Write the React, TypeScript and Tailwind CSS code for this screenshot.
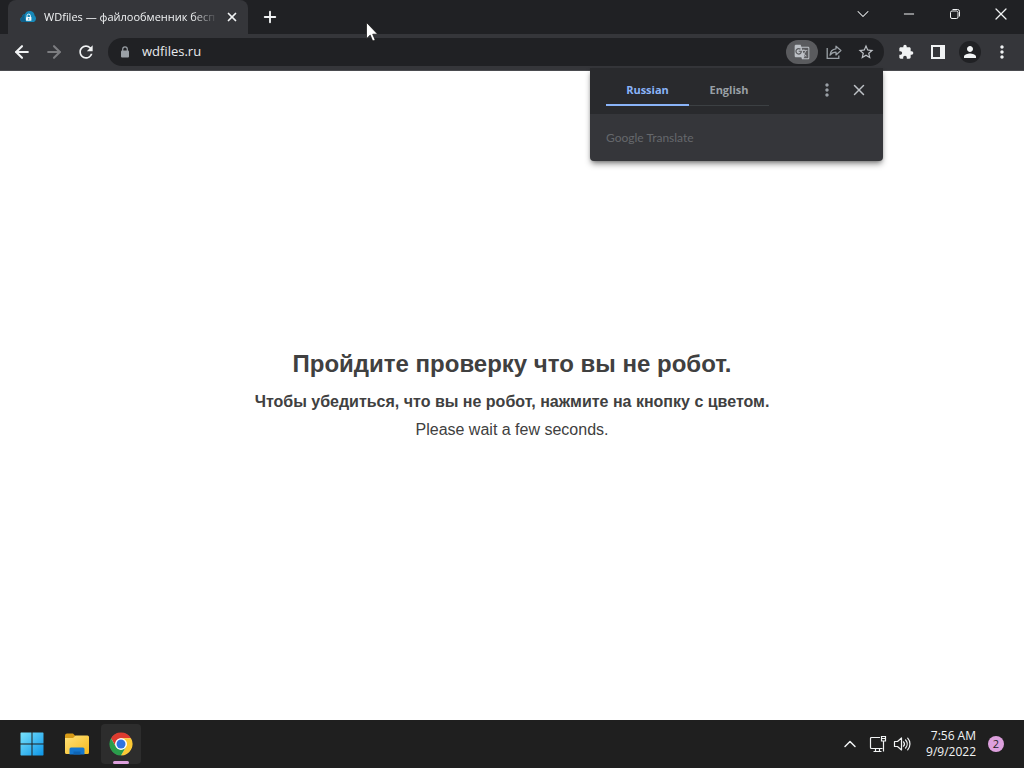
import type { ReactNode } from "react";
import clsx from "clsx";
import { ArrowLeft, ArrowRight, ChevronDown, ChevronUp, Minus, Plus, X } from "lucide-react";
import { MdExtension, MdGTranslate, MdMoreVert, MdPerson, MdRefresh, MdStarOutline } from "react-icons/md";

interface IconButtonProps {
  label: string;
  className?: string;
  children: ReactNode;
}

function IconButton({ label, className, children }: IconButtonProps) {
  return (
    <button type="button" aria-label={label} className={clsx("flex shrink-0 items-center justify-center", className)}>
      {children}
    </button>
  );
}

function CloudIcon() {
  return (
    <svg viewBox="0 0 16 16" className="size-4 shrink-0">
      <path d="M2.500 13a2.500 2.500 0 0 1-.6-4.800A3.600 3.600 0 0 1 5 5a5 5 0 0 1 9.600 1.500A4 4 0 0 1 14 13Z" fill="#1688b8" />
      <path d="M2.500 13a2.500 2.500 0 0 1-.6-4.800A3.600 3.600 0 0 1 5 5C4 7.500 4.500 10.500 6.500 13Z" fill="#0e5f88" />
      <path d="M7 8V6.800a1.700 1.700 0 0 1 3.400 0V8" fill="none" stroke="#e8f7fc" strokeWidth="1" />
      <rect x="6" y="8" width="5.400" height="3.800" rx=".6" fill="#f4fbfe" />
      <path d="M8.700 9.200v1.400" stroke="#1688b8" strokeWidth="1" />
    </svg>
  );
}

function LockIcon() {
  return (
    <svg viewBox="0 0 10 12" className="h-3 w-2.5 shrink-0">
      <path d="M2.700 5V3.200a2.300 2.300 0 0 1 4.600 0V5" fill="none" stroke="currentColor" strokeWidth="1.200" />
      <rect x="1" y="4.500" width="8" height="7" rx="1" fill="currentColor" />
    </svg>
  );
}

function ShareIcon() {
  return (
    <svg viewBox="0 0 16 16" className="size-4" fill="none" stroke="currentColor" strokeWidth="1.300">
      <path d="M1.200 4v10.300h11.600v-2.800" />
      <path d="M10 2.200v2.600C6.300 5.200 4.300 7.500 4 11.200c1.500-2.100 3.400-3 6-3v2.700l4.900-4.400Z" strokeLinejoin="round" />
    </svg>
  );
}

function SidePanelIcon() {
  return (
    <svg viewBox="0 0 14 14" className="size-3.5">
      <path d="M0 0h14v14H0Z" fill="#f1f3f4" />
      <path d="M2 2h7v10H2Z" fill="#35363a" />
    </svg>
  );
}

function RestoreIcon() {
  return (
    <svg viewBox="0 0 10 10" className="size-2.5 overflow-visible" fill="none" stroke="currentColor">
      <rect x=".5" y="2" width="7.500" height="7.500" rx="1.500" />
      <path d="M2.500.5H7.500a2 2 0 0 1 2 2v5" />
    </svg>
  );
}

function WindowsLogo() {
  return (
    <svg viewBox="0 0 24 24" className="size-6">
      <defs>
        <linearGradient id="win" x1="0" y1="0" x2="24" y2="24" gradientUnits="userSpaceOnUse">
          <stop offset="0" stopColor="#7be4fd" />
          <stop offset="1" stopColor="#0a93e6" />
        </linearGradient>
      </defs>
      <path
        fill="url(#win)"
        d="M1 .5h10.500v11H.5V1Zm11.500 0H23l.5.5v10.500h-11ZM.5 12.500h11v11H1l-.5-.5Zm12 0h11V23l-.5.5H12.500Z"
      />
    </svg>
  );
}

function FolderIcon() {
  return (
    <svg viewBox="0 0 26 24" className="h-6 w-[26px]">
      <defs>
        <linearGradient id="folder" x1="0" y1="0" x2="1" y2="1">
          <stop offset="0" stopColor="#ffe27a" />
          <stop offset="1" stopColor="#f6b91d" />
        </linearGradient>
      </defs>
      <path d="M1 3.500A2 2 0 0 1 3 1.500h6l2.500 2.500-3 3.500H1Z" fill="#d79a16" />
      <path d="M1 6h8l2.500-2.500H23.500A1.500 1.500 0 0 1 25 5v15.500a1.500 1.500 0 0 1-1.500 1.500h-21A1.500 1.500 0 0 1 1 20.500Z" fill="url(#folder)" />
      <path d="M5.500 22.500V17A1.500 1.500 0 0 1 7 15.500h12a1.500 1.500 0 0 1 1.500 1.500v5.500Z" fill="#1577cf" />
      <path d="M9.500 22.500v-3h7v3Z" fill="#0f64b4" />
    </svg>
  );
}

function ChromeLogo() {
  return (
    <svg viewBox="0 0 48 48" className="size-6">
      <circle cx="24" cy="24" r="22" fill="#fff" />
      <path d="M4.080 12.500A23 23 0 0 1 43.920 12.500H24A11.500 11.500 0 0 0 14.040 29.750Z" fill="#dd3b2f" />
      <path d="M43.920 12.500A23 23 0 0 1 24 47L33.960 29.750A11.500 11.500 0 0 0 24 12.500Z" fill="#fcc934" />
      <path d="M24 47A23 23 0 0 1 4.080 12.500L14.040 29.750A11.500 11.500 0 0 0 33.960 29.750Z" fill="#2a9d4b" />
      <circle cx="24" cy="24" r="11.500" fill="#fff" />
      <circle cx="24" cy="24" r="9" fill="#2f73e0" />
    </svg>
  );
}

function NetworkIcon() {
  return (
    <svg viewBox="0 0 18 18" className="size-[18px]" fill="none" stroke="currentColor" strokeWidth="1.200">
      <path d="M11 2.500H2.500A1 1 0 0 0 1.500 3.500v9a1 1 0 0 0 1 1h11" />
      <path d="M4.500 16.500h8M6.500 13.500v3M10.500 13.500v3" />
      <path d="M12.500 1.500h4v4.500h-4ZM14.500 6v10.500M12.500 3.500h4" />
    </svg>
  );
}

function VolumeIcon() {
  return (
    <svg viewBox="0 0 18 18" className="size-[18px]" fill="none" stroke="currentColor" strokeWidth="1.200" strokeLinejoin="round">
      <path d="M1.500 6.500H4.500L8.500 3v12L4.500 11.500h-3Z" />
      <path d="M10.500 6.800a3.300 3.300 0 0 1 0 4.400M12.600 5a6 6 0 0 1 0 8M14.700 3.200a8.600 8.600 0 0 1 0 11.600" strokeLinecap="round" />
    </svg>
  );
}

function TabStrip() {
  return (
    <div className="flex h-[34px] bg-[#202124] pl-2">
      <div className="flex w-60 items-center rounded-t-lg bg-[#35363a] pr-2 pl-3">
        <CloudIcon />
        <span className="ml-2 w-[174px] overflow-hidden mask-r-from-85% text-[11px] font-medium whitespace-nowrap">
          WDfiles — файлообменник бесп
        </span>
        <IconButton label="Close tab" className="ml-1.5 size-4">
          <X className="size-3.5" strokeWidth={3} />
        </IconButton>
      </div>
      <IconButton label="New tab" className="ml-2 w-7">
        <Plus className="size-[18px]" strokeWidth={2.5} />
      </IconButton>
      <div className="ml-auto flex h-7">
        <IconButton label="Search tabs" className="w-[46px]">
          <ChevronDown className="size-5" strokeWidth={1.25} />
        </IconButton>
        <IconButton label="Minimize" className="w-[46px]">
          <Minus className="size-4" strokeWidth={1.5} />
        </IconButton>
        <IconButton label="Restore" className="w-[46px]">
          <RestoreIcon />
        </IconButton>
        <IconButton label="Close" className="w-[46px]">
          <X className="size-5" strokeWidth={1.5} />
        </IconButton>
      </div>
    </div>
  );
}

function TranslatePopup() {
  return (
    <div className="absolute top-full right-px z-10 mt-0.5 w-[293px] overflow-hidden rounded-b bg-[#35363a] shadow-md shadow-black/40">
      <div className="flex h-[46px] items-start bg-[#292a2d] pr-2 pl-4 text-[11px] font-bold">
        <button type="button" className="h-[38px] w-[83px] border-b-2 border-[#8ab4f8] pt-2 text-[#8ab4f8]">
          Russian
        </button>
        <button type="button" className="h-[38px] w-20 border-b border-[#3c4043] pt-2 text-[#9aa0a6]">
          English
        </button>
        <IconButton label="Options" className="ml-auto h-11 w-8 text-[#9aa0a6]">
          <MdMoreVert className="size-5" />
        </IconButton>
        <IconButton label="Close translate" className="h-11 w-8 text-[#bdc1c6]">
          <X className="size-[18px]" strokeWidth={2} />
        </IconButton>
      </div>
      <p className="px-4 font-['Lato'] text-xs leading-[47px] text-[#65686c]">Google Translate</p>
    </div>
  );
}

function Toolbar() {
  return (
    <div className="flex h-[37px] items-start border-b border-[#4a4b4f] bg-[#35363a] px-1.5 pt-1">
      <IconButton label="Back" className="h-7 w-8">
        <ArrowLeft className="size-5" strokeWidth={2.5} />
      </IconButton>
      <IconButton label="Forward" className="h-7 w-8 text-[#7c7d80]">
        <ArrowRight className="size-5" strokeWidth={2.5} />
      </IconButton>
      <IconButton label="Reload" className="h-7 w-8">
        <MdRefresh className="size-5" />
      </IconButton>
      <div className="relative mx-1.5 flex h-7 min-w-0 flex-1 items-center rounded-full bg-[#202124] pr-0.5 pl-3 text-[#9aa0a6]">
        <LockIcon />
        <input
          aria-label="Address"
          defaultValue="wdfiles.ru"
          className="ml-3 min-w-0 flex-1 bg-transparent text-[13px] text-[#e8eaed] outline-none"
        />
        <IconButton label="Translate this page" className="h-6 w-8 rounded-full bg-[#5a5b5e] text-[#bdc1c6]">
          <MdGTranslate className="size-4" />
        </IconButton>
        <IconButton label="Share" className="h-6 w-8">
          <ShareIcon />
        </IconButton>
        <IconButton label="Bookmark" className="h-6 w-8 text-[#bdc1c6]">
          <MdStarOutline className="size-[18px]" />
        </IconButton>
        <TranslatePopup />
      </div>
      <IconButton label="Extensions" className="h-7 w-8">
        <MdExtension className="size-4" />
      </IconButton>
      <IconButton label="Side panel" className="h-7 w-8">
        <SidePanelIcon />
      </IconButton>
      <IconButton label="Profile" className="h-7 w-8">
        <span className="flex size-[22px] items-center justify-center rounded-full bg-[#202124]">
          <MdPerson className="size-[18px]" />
        </span>
      </IconButton>
      <IconButton label="Menu" className="h-7 w-8">
        <MdMoreVert className="size-5" />
      </IconButton>
    </div>
  );
}

function Taskbar() {
  return (
    <footer className="flex h-12 items-center bg-[#1f1f1f] pr-5 pl-3">
      <IconButton label="Start" className="size-10">
        <WindowsLogo />
      </IconButton>
      <IconButton label="File Explorer" className="ml-[5px] size-10">
        <FolderIcon />
      </IconButton>
      <IconButton label="Google Chrome" className="relative ml-1 size-10 rounded bg-[#2d2d2d]">
        <ChromeLogo />
        <span className="absolute bottom-0 left-3 h-[3px] w-4 rounded-full bg-[#dda0dd]" />
      </IconButton>
      <div className="ml-auto flex items-center">
        <IconButton label="Show hidden icons" className="size-6">
          <ChevronUp className="size-5" strokeWidth={1.75} />
        </IconButton>
        <IconButton label="Network" className="ml-1 size-6">
          <NetworkIcon />
        </IconButton>
        <IconButton label="Volume" className="size-6">
          <VolumeIcon />
        </IconButton>
        <button type="button" className="ml-3 text-right text-xs leading-4">
          7:56 AM
          <br />
          9/9/2022
        </button>
        <button
          type="button"
          aria-label="2 notifications"
          className="ml-3 size-4 rounded-full bg-[#dda0dd] text-[11px] leading-4 text-[#1f1f1f]"
        >
          2
        </button>
      </div>
    </footer>
  );
}

export default function App() {
  return (
    <div className="relative flex h-screen flex-col bg-white font-['Open_Sans',sans-serif] text-[#f1f3f4]">
      <header>
        <TabStrip />
        <Toolbar />
      </header>
      <main className="flex flex-1 flex-col items-center justify-center text-center font-['Liberation_Sans',Arial,sans-serif] text-[#404040]">
        <h1 className="mb-2 text-2xl font-bold">Пройдите проверку что вы не робот.</h1>
        <p className="leading-7 font-bold">Чтобы убедиться, что вы не робот, нажмите на кнопку с цветом.</p>
        <p className="leading-7">Please wait a few seconds.</p>
      </main>
      <Taskbar />
      {/* mouse pointer */}
      <svg viewBox="0 0 12 20" className="pointer-events-none absolute top-[22px] left-[366px] z-20 h-5 w-3">
        <path d="M.5.5v16.200l3.700-3.600 2.500 5.900 2.500-1-2.500-5.800h5Z" fill="#fff" stroke="#111" strokeWidth=".7" />
      </svg>
    </div>
  );
}
